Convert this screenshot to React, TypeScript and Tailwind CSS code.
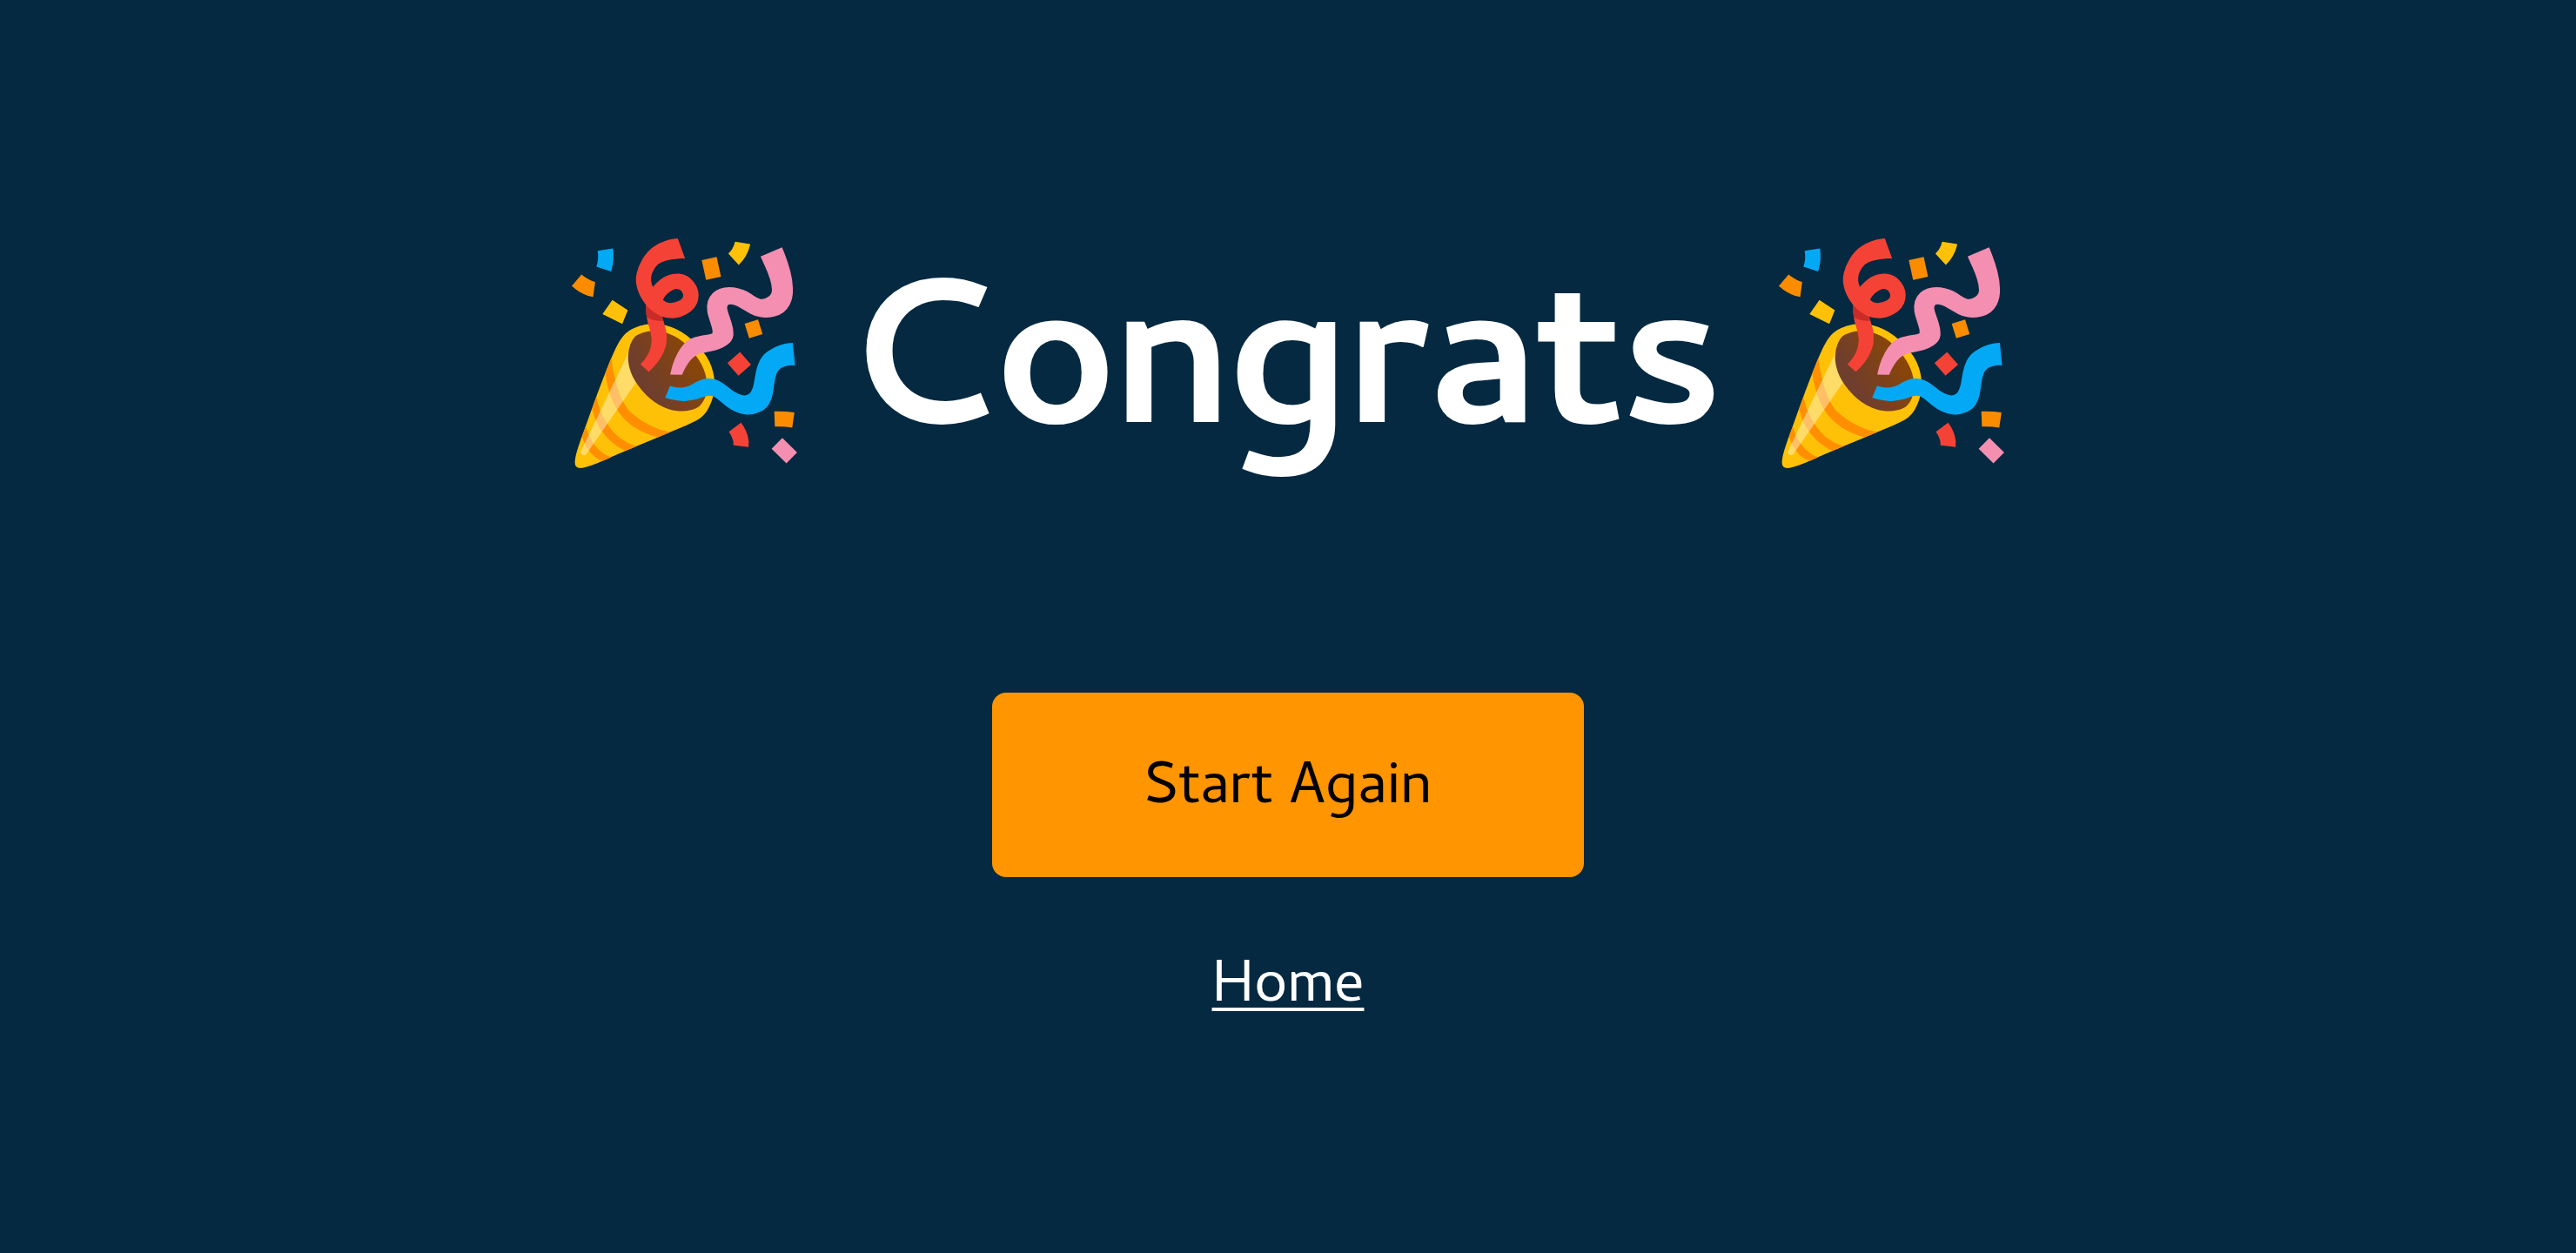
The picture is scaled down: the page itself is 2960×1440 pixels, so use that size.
export default function App() {
  return (
    <main className="flex h-[1440px] w-full flex-col items-center overflow-hidden bg-[#042940] font-['Cambay','M_PLUS_2','Noto_Sans',sans-serif] text-white">
      <h1 className="mt-[241px] flex h-[400px] w-[1687px] shrink-0 items-baseline justify-between text-[240px] leading-[400px] font-bold whitespace-nowrap">
        <span className="relative top-[3px]">🎉</span>
        <span className="tracking-[-1px]">Congrats</span>
        <span className="relative top-[3px]">🎉</span>
      </h1>
      <button className="mt-[155px] h-[212px] w-[680px] shrink-0 rounded-2xl bg-[#ff9500] pt-4 text-[68px] leading-[116px] text-black">
        Start Again
      </button>
      <a href="#" className="mt-[72px] text-[68px] leading-[116px] underline decoration-4 underline-offset-8">
        Home
      </a>
    </main>
  );
}
